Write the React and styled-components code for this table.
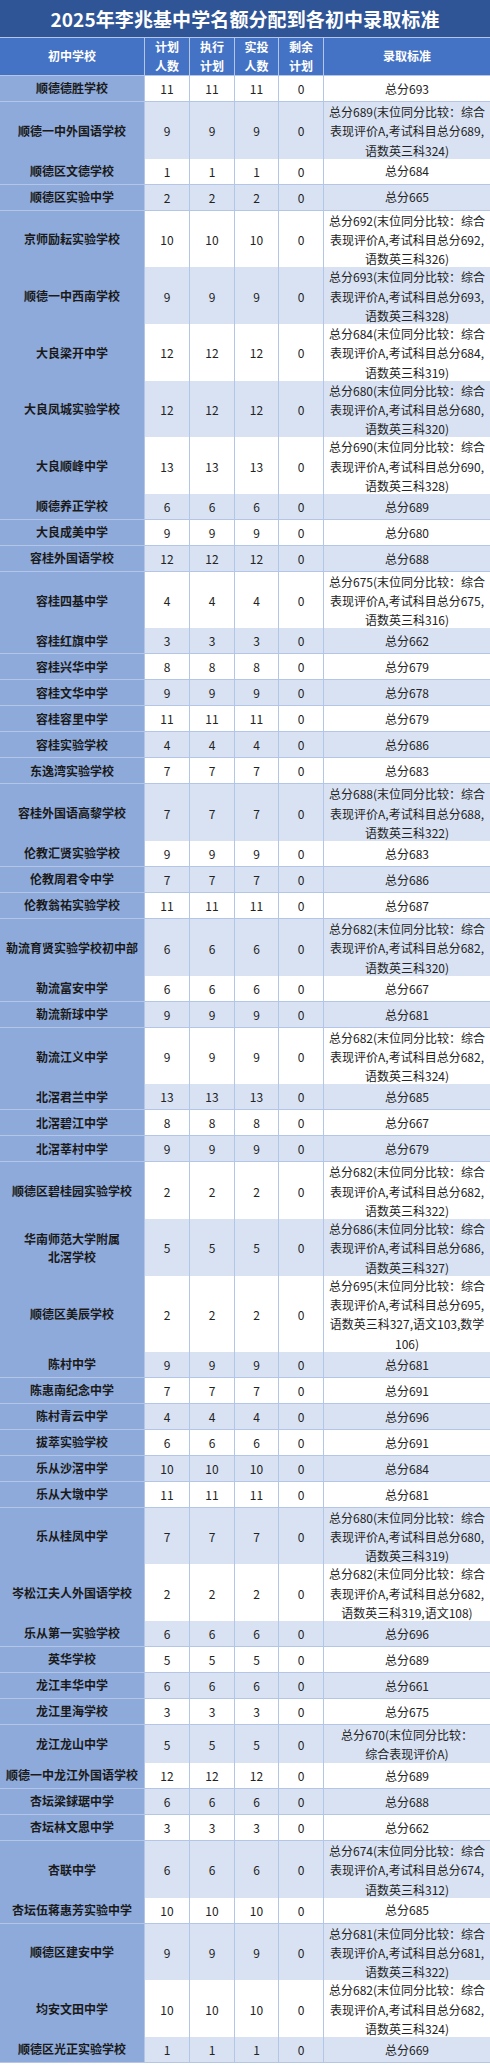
import React from "react";
import styled, { createGlobalStyle } from "styled-components";

const GlobalStyle = createGlobalStyle`
  html, body { margin: 0; padding: 0; background: #ffffff; }
  body { font-family: "Noto Sans CJK SC", "Noto Sans", sans-serif; }
`;

const COLS = "145px 45px 45px 44px 45px 166px";
const BORDER = "#b4c6e7";
const HEIGHTS = { 1: 26, 2: 38, 3: 56.65, 4: 76 };

const Sheet = styled.div`
  width: 490px;
  display: flex;
  flex-direction: column;
`;

const Title = styled.div`
  height: 37px;
  background: #2f5597;
  border-bottom: 1px solid ${BORDER};
  color: #ffffff;
  font-size: 19px;
  font-weight: 700;
  display: flex;
  align-items: center;
  justify-content: center;
  letter-spacing: 0.1px;
`;

const Row = styled.div`
  display: grid;
  grid-template-columns: ${COLS};
  height: ${(p) => p.$h}px;
  background: ${(p) => (p.$alt ? "#d9e2f3" : "#ffffff")};
`;

const HeaderRow = styled(Row)`
  background: #4472c4;
`;

const Cell = styled.div`
  box-sizing: border-box;
  border-right: 1px solid ${BORDER};
  border-bottom: 1px solid ${BORDER};
  display: flex;
  flex-direction: column;
  align-items: center;
  justify-content: center;
  text-align: center;
  white-space: nowrap;
  overflow: visible;
  font-size: 12px;
  color: #222222;
  &:last-child { border-right: none; }
`;

const HeadCell = styled(Cell)`
  color: #ffffff;
  font-weight: 600;
  line-height: 18.3px;
`;

const NameCell = styled(Cell)`
  background: #8eaadb;
  font-weight: 700;
  color: #1a1a1a;
  line-height: 18.3px;
`;

const NumCell = styled(Cell)`
  line-height: 19px;
`;

const StdCell = styled(Cell)`
  line-height: 19.3px;
`;

const std = (score, three, extra) => [
  `总分${score}(末位同分比较：综合`,
  `表现评价A,考试科目总分${score},`,
  extra ? extra : `语数英三科${three})`,
];

const data = [
  ["顺德德胜学校", 11, ["总分693"]],
  ["顺德一中外国语学校", 9, std(689, 324)],
  ["顺德区文德学校", 1, ["总分684"]],
  ["顺德区实验中学", 2, ["总分665"]],
  ["京师励耘实验学校", 10, std(692, 326)],
  ["顺德一中西南学校", 9, std(693, 328)],
  ["大良梁开中学", 12, std(684, 319)],
  ["大良凤城实验学校", 12, std(680, 320)],
  ["大良顺峰中学", 13, std(690, 328)],
  ["顺德养正学校", 6, ["总分689"]],
  ["大良成美中学", 9, ["总分680"]],
  ["容桂外国语学校", 12, ["总分688"]],
  ["容桂四基中学", 4, std(675, 316)],
  ["容桂红旗中学", 3, ["总分662"]],
  ["容桂兴华中学", 8, ["总分679"]],
  ["容桂文华中学", 9, ["总分678"]],
  ["容桂容里中学", 11, ["总分679"]],
  ["容桂实验学校", 4, ["总分686"]],
  ["东逸湾实验学校", 7, ["总分683"]],
  ["容桂外国语高黎学校", 7, std(688, 322)],
  ["伦教汇贤实验学校", 9, ["总分683"]],
  ["伦教周君令中学", 7, ["总分686"]],
  ["伦教翁祐实验学校", 11, ["总分687"]],
  ["勒流育贤实验学校初中部", 6, std(682, 320)],
  ["勒流富安中学", 6, ["总分667"]],
  ["勒流新球中学", 9, ["总分681"]],
  ["勒流江义中学", 9, std(682, 324)],
  ["北滘君兰中学", 13, ["总分685"]],
  ["北滘碧江中学", 8, ["总分667"]],
  ["北滘莘村中学", 9, ["总分679"]],
  ["顺德区碧桂园实验学校", 2, std(682, 322)],
  [["华南师范大学附属", "北滘学校"], 5, std(686, 327)],
  [
    "顺德区美辰学校",
    2,
    [
      "总分695(末位同分比较：综合",
      "表现评价A,考试科目总分695,",
      "语数英三科327,语文103,数学",
      "106)",
    ],
  ],
  ["陈村中学", 9, ["总分681"]],
  ["陈惠南纪念中学", 7, ["总分691"]],
  ["陈村青云中学", 4, ["总分696"]],
  ["拔萃实验学校", 6, ["总分691"]],
  ["乐从沙滘中学", 10, ["总分684"]],
  ["乐从大墩中学", 11, ["总分681"]],
  ["乐从桂凤中学", 7, std(680, 319)],
  ["岑松江夫人外国语学校", 2, std(682, 0, "语数英三科319,语文108)")],
  ["乐从第一实验学校", 6, ["总分696"]],
  ["英华学校", 5, ["总分689"]],
  ["龙江丰华中学", 6, ["总分661"]],
  ["龙江里海学校", 3, ["总分675"]],
  ["龙江龙山中学", 5, ["总分670(末位同分比较：", "综合表现评价A)"]],
  ["顺德一中龙江外国语学校", 12, ["总分689"]],
  ["杏坛梁銶琚中学", 6, ["总分688"]],
  ["杏坛林文恩中学", 3, ["总分662"]],
  ["杏联中学", 6, std(674, 312)],
  ["杏坛伍蒋惠芳实验中学", 10, ["总分685"]],
  ["顺德区建安中学", 9, std(681, 322)],
  ["均安文田中学", 10, std(682, 324)],
  ["顺德区光正实验学校", 1, ["总分669"]],
];

const Lines = ({ lines }) =>
  lines.map((l, i) => <span key={i}>{l}</span>);

export default function App() {
  return (
    <>
      <GlobalStyle />
      <Sheet>
        <Title>2025年李兆基中学名额分配到各初中录取标准</Title>
        <HeaderRow $h={38}>
          <HeadCell>初中学校</HeadCell>
          <HeadCell><Lines lines={["计划", "人数"]} /></HeadCell>
          <HeadCell><Lines lines={["执行", "计划"]} /></HeadCell>
          <HeadCell><Lines lines={["实投", "人数"]} /></HeadCell>
          <HeadCell><Lines lines={["剩余", "计划"]} /></HeadCell>
          <HeadCell>录取标准</HeadCell>
        </HeaderRow>
        {data.map(([name, n, standard], i) => {
          const names = Array.isArray(name) ? name : [name];
          const lines = Math.max(names.length, standard.length);
          return (
            <Row key={i} $h={HEIGHTS[lines]} $alt={i % 2 === 1}>
              <NameCell><Lines lines={names} /></NameCell>
              <NumCell>{n}</NumCell>
              <NumCell>{n}</NumCell>
              <NumCell>{n}</NumCell>
              <NumCell>0</NumCell>
              <StdCell><Lines lines={standard} /></StdCell>
            </Row>
          );
        })}
      </Sheet>
    </>
  );
}
